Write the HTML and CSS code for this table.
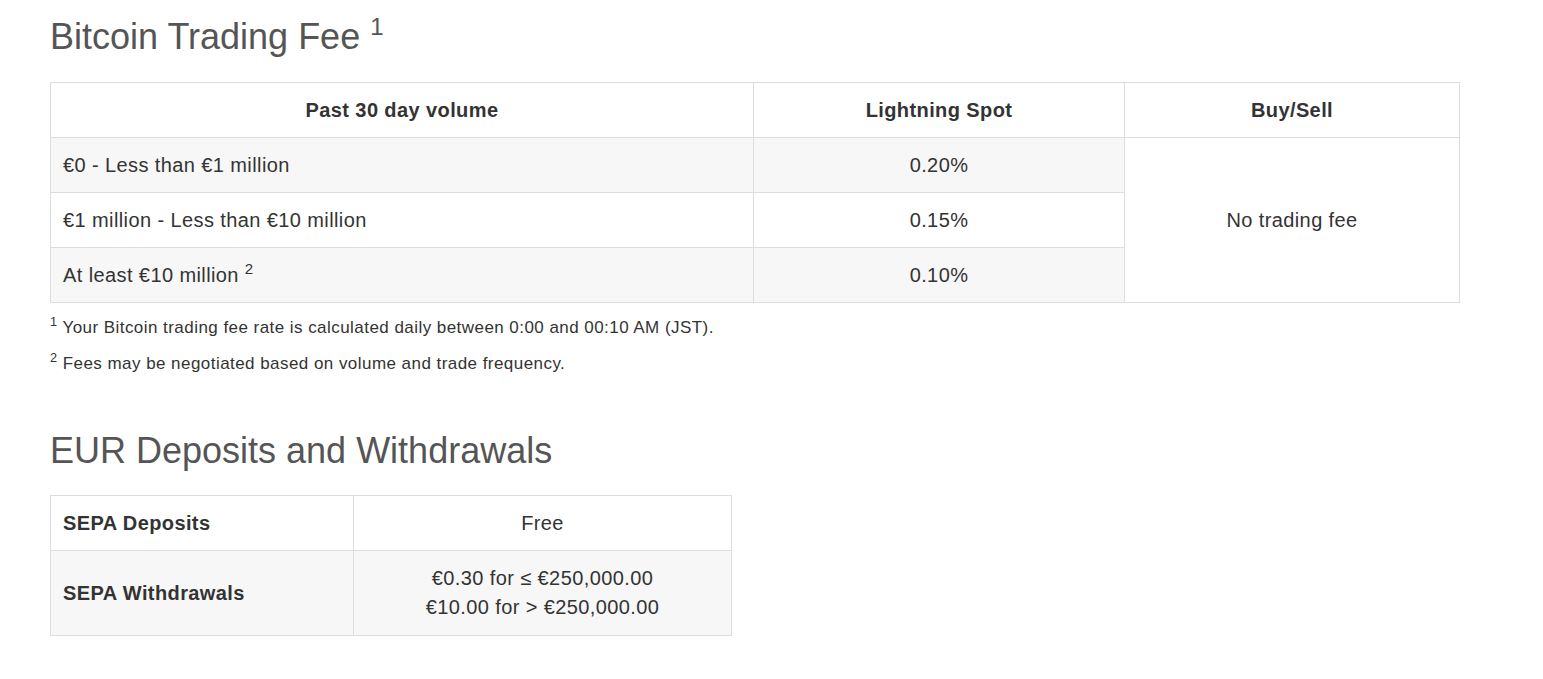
FILE: index.html
```html
<!DOCTYPE html>
<html lang="en">
<head>
<meta charset="utf-8">
<title>Fees</title>
<link rel="stylesheet" href="styles.css">
</head>
<body>
<main class="page">
  <h1 class="title">Bitcoin Trading Fee <sup class="title-sup">1</sup></h1>
  <table class="fee-table fee-table--trading">
    <colgroup>
      <col class="c1"><col class="c2"><col class="c3">
    </colgroup>
    <thead>
      <tr>
        <th>Past 30 day volume</th>
        <th>Lightning Spot</th>
        <th>Buy/Sell</th>
      </tr>
    </thead>
    <tbody>
      <tr class="stripe">
        <td class="left">€0 - Less than €1 million</td>
        <td>0.20%</td>
        <td rowspan="3" class="plain">No trading fee</td>
      </tr>
      <tr>
        <td class="left">€1 million - Less than €10 million</td>
        <td>0.15%</td>
      </tr>
      <tr class="stripe">
        <td class="left">At least €10 million <sup>2</sup></td>
        <td>0.10%</td>
      </tr>
    </tbody>
  </table>
  <p class="note"><sup>1</sup> Your Bitcoin trading fee rate is calculated daily between 0:00 and 00:10 AM (JST).</p>
  <p class="note"><sup>2</sup> Fees may be negotiated based on volume and trade frequency.</p>

  <h2 class="title title--second">EUR Deposits and Withdrawals</h2>
  <table class="fee-table fee-table--eur">
    <colgroup>
      <col class="d1"><col class="d2">
    </colgroup>
    <tbody>
      <tr>
        <th class="left">SEPA Deposits</th>
        <td>Free</td>
      </tr>
      <tr class="stripe tall">
        <th class="left">SEPA Withdrawals</th>
        <td>€0.30 for ≤ €250,000.00<br>€10.00 for &gt; €250,000.00</td>
      </tr>
    </tbody>
  </table>
</main>
</body>
</html>
```
FILE: styles.css
```css
html, body {
  margin: 0;
  padding: 0;
  background: #fff;
}
body {
  font-family: "Liberation Sans", Arial, Helvetica, sans-serif;
  color: #333;
  font-size: 16px;
}
.page {
  padding: 17px 50px 40px;
}
.title {
  font-size: 36px;
  font-weight: 400;
  line-height: 39.6px;
  color: #555;
  margin: 0 0 25px;
}
.title--second {
  margin-top: 56px;
}
.title-sup {
  font-size: 24px;
  line-height: 0;
  position: relative;
  top: -14px;
  vertical-align: baseline;
}
sup {
  font-size: 75%;
  line-height: 0;
  position: relative;
  top: -0.5em;
  vertical-align: baseline;
}
.fee-table {
  border-collapse: collapse;
  table-layout: fixed;
  font-size: 20px;
  letter-spacing: 0.4px;
  line-height: 29px;
}
.fee-table--trading {
  width: 1409px;
}
.fee-table--trading .c1 { width: 703px; }
.fee-table--trading .c2 { width: 371px; }
.fee-table--trading .c3 { width: 335px; }
.fee-table--eur {
  width: 681px;
}
.fee-table--eur .d1 { width: 303px; }
.fee-table--eur .d2 { width: 378px; }
.fee-table th,
.fee-table td {
  border: 1px solid #ddd;
  padding: 13px 12px 12px;
  text-align: center;
  vertical-align: middle;
}
.fee-table .tall th,
.fee-table .tall td {
  padding-bottom: 13px;
}
.fee-table th {
  font-weight: 700;
}
.fee-table .left {
  text-align: left;
}
.fee-table .stripe {
  background: #f7f7f7;
}
.fee-table .plain {
  background: #fff;
}
.note {
  font-size: 17px;
  letter-spacing: 0.45px;
  line-height: 23px;
  margin: 13px 0 13px;
}
.note + .note {
  margin-top: 0;
}
```
